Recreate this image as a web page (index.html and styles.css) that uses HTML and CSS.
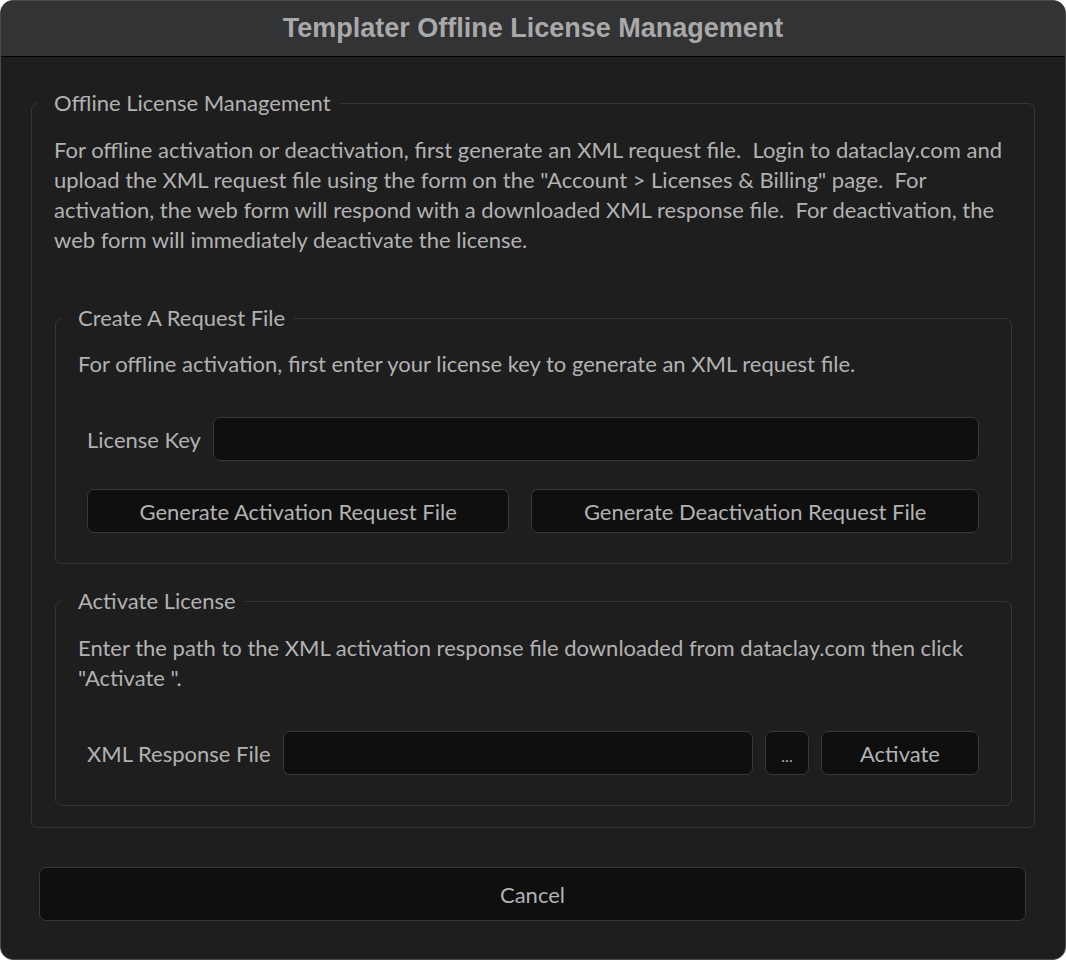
FILE: index.html
```html
<!DOCTYPE html>
<html>
<head>
<meta charset="utf-8">
<link rel="stylesheet" href="styles.css">
</head>
<body>
<div class="window">
  <div class="titlebar">Templater Offline License Management</div>
  <div class="content">
    <fieldset class="group outer">
      <legend>Offline License Management</legend>
      <p class="desc">For offline activation or deactivation, first generate an XML request file.&nbsp; Login to dataclay.com and upload the XML request file using the form on the "Account &gt; Licenses &amp; Billing" page.&nbsp; For activation, the web form will respond with a downloaded XML response file.&nbsp; For deactivation, the web form will immediately deactivate the license.</p>

      <fieldset class="group inner first">
        <legend>Create A Request File</legend>
        <p class="desc">For offline activation, first enter your license key to generate an XML request file.</p>
        <div class="row field-row">
          <label class="label">License Key</label>
          <div class="input grow"></div>
        </div>
        <div class="row btn-row">
          <div class="btn half">Generate Activation Request File</div>
          <div class="btn half">Generate Deactivation Request File</div>
        </div>
      </fieldset>

      <fieldset class="group inner second">
        <legend>Activate License</legend>
        <p class="desc">Enter the path to the XML activation response file downloaded from dataclay.com then click "Activate ".</p>
        <div class="row field-row">
          <label class="label">XML Response File</label>
          <div class="input grow"></div>
          <div class="btn dots">...</div>
          <div class="btn activate">Activate</div>
        </div>
      </fieldset>
    </fieldset>

    <div class="btn cancel">Cancel</div>
  </div>
</div>
</body>
</html>
```

FILE: styles.css
```css
html, body {
  margin: 0;
  padding: 0;
  background: #ffffff;
}

.window {
  width: 1066px;
  height: 960px;
  box-sizing: border-box;
  border-radius: 13px;
  overflow: hidden;
  background: #1e1e1e;
  border: 1px solid #4a4a4c;
  display: flex;
  flex-direction: column;
  font-family: "Lato", "Open Sans", sans-serif;
  color: #b2b2b2;
}

.titlebar {
  height: 55px;
  flex: none;
  background: #323335;
  border-bottom: 1px solid #000000;
  display: flex;
  align-items: center;
  justify-content: center;
  font-family: "Liberation Sans", Arial, sans-serif;
  font-weight: bold;
  font-size: 27px;
  color: #a9a9a9;
}

.content {
  padding: 31px 30px 0 30px;
  display: flex;
  flex-direction: column;
}

.group {
  margin: 0;
  border: 1px solid #363636;
  border-radius: 7px;
  min-width: 0;
}

.group legend {
  font-size: 22px;
  line-height: 30px;
  padding: 0 9px 0 16px;
  margin-left: -16px;
  color: #b2b2b2;
}

.outer {
  padding: 0 22px 21px 22px;
}

.inner {
  padding: 0 22px 30px 22px;
  margin-left: 1px;
}

.inner.first {
  margin-top: 48px;
}

.inner.second {
  margin-top: 22px;
}

.desc {
  margin: 17px 0 0 0;
  font-size: 22px;
  line-height: 30px;
}

.inner .desc {
  margin-top: 16px;
}

.inner.second .desc {
  margin-top: 17px;
}

.row {
  display: flex;
  align-items: center;
  padding: 0 10px 0 9px;
}

.field-row {
  margin-top: 38px;
  gap: 12px;
}

.btn-row {
  margin-top: 28px;
  gap: 22px;
}

.label {
  font-size: 22px;
  white-space: nowrap;
}

.input {
  height: 42px;
  background: #0f0f0f;
  border: 1px solid #393939;
  border-radius: 7px;
}

.grow {
  flex: 1;
}

.btn {
  height: 42px;
  background: #0f0f0f;
  border: 1px solid #393939;
  border-radius: 7px;
  display: flex;
  align-items: center;
  justify-content: center;
  font-size: 22px;
  color: #b2b2b2;
  box-sizing: content-box;
}

.half {
  flex: 1 1 auto;
  padding: 0 10px;
}

.dots {
  width: 42px;
  font-size: 16px;
  padding-top: 4px;
  height: 38px;
}

.activate {
  width: 156px;
}

.cancel {
  margin: 39px 9px 0 8px;
  height: 52px;
}
```
